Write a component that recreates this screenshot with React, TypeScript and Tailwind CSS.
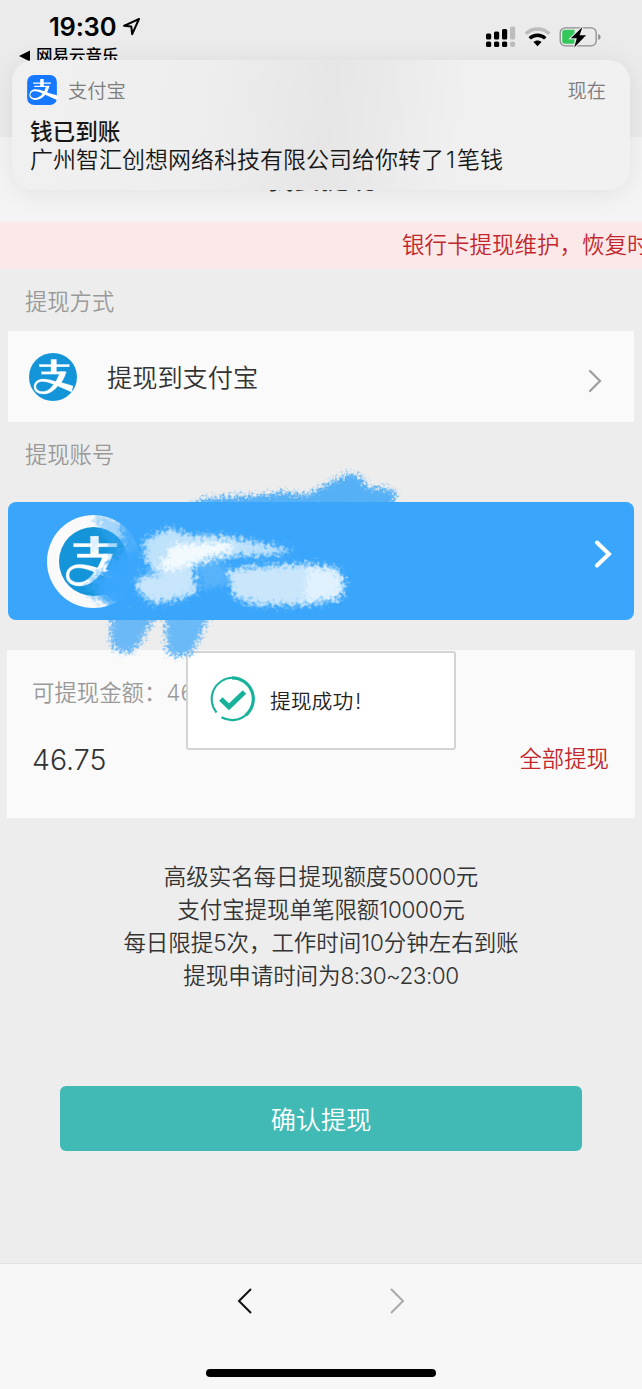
import React from "react";
import { SiAlipay } from "react-icons/si";

function AlipayGlyph({ className }: { className?: string }) {
  return (
    <svg viewBox="0 0 48 48" className={className} fill="none">
      <g fill="#fff" stroke="#fff" strokeWidth=".3">
        <rect x="10.300" y="11.500" width="30" height="2.300" />
        <rect x="22" y="6.400" width="5.400" height="14" />
        <rect x="12.700" y="18.800" width="23" height="2.300" />
        <path d="M30.800 18.800h6.500c-1.200 4-2.900 7.500-5 10.700l11.700 3.400-1.500 6L28.700 32.900c-3.600 4.600-8.200 8.100-14.500 8.100-5.600 0-9.200-2.900-9.200-7.200 0-4.900 4.300-7.700 9-7.700 4.300 0 8.400 1 12.700 2.500 1.600-2.700 3.200-5.700 4.100-9.800zM13.300 28.400c-3.700 0-6.300 2.100-6.300 5.100 0 3 2.700 5.100 6.900 5.100 4.200 0 8-2.900 10.700-7.300-4.100-1.700-7.800-2.900-11.300-2.900z" />
      </g>
    </svg>
  );
}

function StatusIcons() {
  return (
    <svg width="118" height="24" viewBox="0 0 118 24">
      <g fill="#000">
        <rect x="2" y="8.500" width="5.200" height="6" rx="1.500" />
        <rect x="10" y="6.500" width="5.200" height="8" rx="1.500" />
        <rect x="18" y="4" width="5.200" height="10.500" rx="1.500" />
        <rect x="2" y="16.500" width="5.200" height="5.500" rx="1.500" />
        <rect x="10" y="16.500" width="5.200" height="5.500" rx="1.500" />
        <rect x="18" y="16.500" width="5.200" height="5.500" rx="1.500" />
      </g>
      <g fill="#bdbdbd">
        <rect x="26" y="1.500" width="5.200" height="13" rx="1.500" />
        <rect x="26" y="16.500" width="5.200" height="5.500" rx="2" />
      </g>
      <g fill="none" strokeWidth="3.400">
        <path d="M41.800 8.700c6.500-6.300 17-6.300 23.500 0" stroke="#bdbdbd" />
        <path d="M45.700 13.400c4.300-4.300 11.300-4.300 15.600 0" stroke="#000" />
      </g>
      <path d="M49.500 17c2.200-2 5.800-2 8 0l-4 4.200z" fill="#000" />
      <rect x="76.200" y="2.800" width="36" height="18" rx="5" fill="none" stroke="#8e8e8e" strokeWidth="1.300" />
      <path d="M81 4.800h9.500v14H81a2.800 2.800 0 0 1-2.800-2.800V7.600A2.800 2.800 0 0 1 81 4.800z" fill="#34c759" />
      <path d="M114.200 9v6c1.900-.8 2.400-1.900 2.400-3s-.5-2.200-2.400-3z" fill="#8e8e8e" />
      <path d="M98.500 2 86.800 13.200h6l-2.600 9.300 11.900-12.300h-6.500z" fill="#000" stroke="#ededed" strokeWidth="2" paintOrder="stroke" />
    </svg>
  );
}

function BrushStrokes() {
  return (
    <svg className="absolute left-0 -top-[42px] w-[442px] h-[210px] pointer-events-none" viewBox="0 460 442 210">
      <defs>
        <filter id="rough" x="-20%" y="-30%" width="140%" height="160%" colorInterpolationFilters="sRGB">
          <feGaussianBlur stdDeviation="2.200" result="b" />
          <feTurbulence type="fractalNoise" baseFrequency="0.350" numOctaves="3" seed="4" result="n" />
          <feDisplacementMap in="b" in2="n" scale="15" xChannelSelector="R" yChannelSelector="G" />
          <feGaussianBlur stdDeviation="0.700" />
        </filter>
        <filter id="soft" x="-30%" y="-30%" width="160%" height="160%" colorInterpolationFilters="sRGB">
          <feGaussianBlur stdDeviation="2.600" result="b" />
          <feTurbulence type="fractalNoise" baseFrequency="0.250" numOctaves="3" seed="8" result="n" />
          <feDisplacementMap in="b" in2="n" scale="15" xChannelSelector="R" yChannelSelector="G" />
          <feGaussianBlur stdDeviation="0.600" />
        </filter>
      </defs>
      <g filter="url(#rough)">
        <path d="M188 508 196 501 212 498 235 496 262 495 282 492 307 495 325 485 350 473 361 477 367 487 385 488 397 492 392 508z" fill="#55b0f6" />
        <path d="M112 612 110 636 112 647 122 653 133 652 142 640 158 612z" fill="#6bb9f7" />
        <path d="M164 612 167 653 178 657 192 653 200 638 204 626 214 612z" fill="#6bbaf8" />
      </g>
      <path d="M175 502h245v20H175zM142 598h95v22h-95zM90 608h55v12H90z" fill="#3aa6fb" />
      <g filter="url(#soft)">
        <path d="M92 514C112 513 134 528 140 548L136 596 112 608 98 602 84 590 92 574 106 570 112 552 104 535z" fill="#3aa6fb" opacity=".45" />
        <path d="M122 518 144 530 146 600 116 608 100 598 94 580 110 568 122 552z" fill="#3aa6fb" opacity=".85" />
        <path d="M106 564 142 548 146 604 116 604 104 590z" fill="#3aa6fb" opacity=".85" />
        <path d="M92 536h5v14h-5z" fill="#3aa6fb" opacity=".3" />
        <path d="M144 540 170 528 188 535 224 536 250 541 292 550 278 555 235 556 208 562 178 572 150 570 145 556z" fill="#bfe2fb" />
        <path d="M172 545 225 542 236 549 202 559 176 570 154 570 166 557z" fill="#f3fafe" />
        <path d="M137 578 192 565 198 592 180 599 152 604 137 590z" fill="#c7e5fb" />
        <path d="M198 566 222 560 226 584 204 590z" fill="#6dbdfc" opacity=".6" />
        <path d="M226 570 262 566 310 564 338 568 345 582 342 598 310 605 255 605 234 597z" fill="#c9e6fb" />
        <path d="M308 567 334 571 342 584 336 596 304 602z" fill="#e1f2fe" />
      </g>
    </svg>
  );
}

function Notification() {
  return (
    <section className="absolute left-3 top-[60px] w-[618px] h-[130px] rounded-[22px] bg-[linear-gradient(97deg,#f0f0f0_0%,#eeeeee_30%,#e6e6e6_51%,#eaeaea_60%,#f0f0f0_72%,#f1f1f1_100%)] shadow-[0_3px_26px_rgba(0,0,0,0.08)] pt-[15px] pl-[15px] pr-[24px]">
      <div className="flex h-[30px] items-center">
        <span className="relative flex size-[30px] items-center justify-center overflow-hidden rounded-[7px] bg-white">
          <SiAlipay className="size-[30px] text-[#1677ff]" />
        </span>
        <span className="mt-px ml-[11px] text-[19.300px] leading-[30px] text-[#7d7d7d]">支付宝</span>
        <span className="mt-px ml-auto text-[19.300px] leading-[30px] text-[#7d7d7d]">现在</span>
      </div>
      <div className="mt-[12px] ml-[3px] text-[22.600px] leading-[29px] font-medium text-[#171717]">钱已到账</div>
      <div className="ml-[3px] text-[23px] leading-[29px] whitespace-nowrap text-[#171717]">广州智汇创想网络科技有限公司给你转了<span className="mx-[2px]">1</span>笔钱</div>
    </section>
  );
}

function Toast() {
  return (
    <div className="absolute left-[186px] top-[651px] flex h-[99px] w-[270px] items-center rounded-[3px] border-2 border-[#d4d4d4] bg-white pl-[20px]">
      <svg className="-mt-[4px]" width="48" height="48" viewBox="0 0 48 48" fill="none" stroke="#17b29a">
        <path d="M8.500 37.500A21.200 21.200 0 0 1 24.500 2.800" strokeWidth="2" />
        <path d="M24 2.800A21.200 21.200 0 0 1 38 40" strokeWidth="3.200" />
        <path d="M39 39A21.200 21.200 0 0 1 13.500 42.300" strokeWidth="2.200" />
        <path d="M12.800 24 21 31.800 36.500 17" strokeWidth="5" />
      </svg>
      <span className="mt-[3px] ml-[14px] text-[20.800px] leading-[30px] text-[#222]">提现成功<span className="ml-[2px]">!</span></span>
    </div>
  );
}

export default function App() {
  return (
    <main className="relative flex h-[1389px] w-[642px] flex-col overflow-hidden bg-[#ededed] font-['Inter','Noto_Sans_CJK_SC',sans-serif] font-[350]">
      <header className="h-[137px] shrink-0 bg-[#ebebeb]">
        <div className="flex h-[46px] items-start justify-between">
          <div className="flex pt-[11px] pl-[49px]">
            <span className="text-[25.500px] leading-[32px] font-semibold tracking-[-0.200px] text-black">19:30</span>
            <svg className="mt-[6px] ml-[6px]" width="19" height="19" viewBox="0 0 19 19" fill="none" stroke="#000" strokeWidth="2" strokeLinejoin="round">
              <path d="M17 2 2 8.800l7.300.8.900 7.600z" />
            </svg>
          </div>
          <div className="pt-[25px] pr-[40px]"><StatusIcons /></div>
        </div>
        <div className="flex h-[20px] items-center gap-[6px] pl-[19px] text-[16.500px] font-medium text-black">
          <svg width="11" height="12" viewBox="0 0 11 12"><path d="M0 6 11 .5v11z" /></svg>
          <span className="leading-5">网易云音乐</span>
        </div>
      </header>
      <div className="flex h-[85px] shrink-0 items-center justify-center bg-[#f4f4f4] pt-px text-[27px] font-medium text-[#333]">我要提现</div>
      <div className="h-[47px] shrink-0 overflow-hidden bg-[#fbe8e8] pl-[402px] text-[22.500px] leading-[45px] whitespace-nowrap text-[#c1272d]">银行卡提现维护，恢复时间另行通知</div>
      <div className="h-[62px] shrink-0 pl-[25px] text-[22.300px] leading-[65px] text-[#999]">提现方式</div>
      <div className="mx-2 flex h-[91px] shrink-0 items-center bg-[#fafafa] pr-[32px] pl-[21px]">
        <span className="size-12 shrink-0 rounded-full bg-[#1495da]"><AlipayGlyph className="size-12" /></span>
        <span className="mt-[4px] ml-[30px] text-[25.200px] text-[#333]">提现到支付宝</span>
        <svg className="mt-[8px] ml-auto" width="14" height="24" viewBox="0 0 14 24" fill="none" stroke="#a0a0a0" strokeWidth="2.300" strokeLinecap="round"><path d="m2 2 10 10L2 22" /></svg>
      </div>
      <div className="h-[80px] shrink-0 pl-[25px] text-[22.300px] leading-[66px] text-[#999]">提现账号</div>
      <div className="relative z-10 h-[118px] shrink-0">
        <div className="mx-2 flex h-[118px] items-center rounded-lg bg-[#3aa6fb] pr-[22px] pl-[39px]">
          <span className="flex size-[93px] items-center justify-center rounded-full bg-[#fafafa]">
            <span className="size-[69px] rounded-full bg-[#1495da]"><AlipayGlyph className="size-[69px]" /></span>
          </span>
          <svg className="-mt-[14px] ml-auto" width="18" height="28" viewBox="0 0 18 28" fill="none" stroke="#fff" strokeWidth="4" strokeLinecap="round"><path d="m3 2.500 12 11.500L3 25.500" /></svg>
        </div>
        <BrushStrokes />
      </div>
      <div className="mx-[7px] mt-[30px] h-[168px] shrink-0 bg-[#fafafa] px-[25px] pt-[26px]">
        <div className="text-[22.400px] leading-[34px] text-[#999]">可提现金额：46.75</div>
        <div className="mt-[31px] flex items-center justify-between">
          <span className="text-[28.500px] leading-[38px] text-[#333]">46.75</span>
          <span className="-mt-[3px] mr-px text-[22.400px] leading-[34px] text-[#c1272d]">全部提现</span>
        </div>
      </div>
      <div className="mt-[42px] text-center text-[22.500px] leading-[33px] tracking-[-0.050px] text-[#333]">
        <p>高级实名每日提现额度<span className="tracking-[-0.300px]">50000</span>元</p>
        <p>支付宝提现单笔限额<span className="tracking-[-0.300px]">10000</span>元</p>
        <p>每日限提5次，工作时间10分钟左右到账</p>
        <p>提现申请时间为<span className="tracking-[-0.500px]">8:30~23:00</span></p>
      </div>
      <button className="mx-[60px] mt-[94px] h-[65px] shrink-0 rounded-md bg-[#41bab6] pt-[4px] text-[25.200px] text-white">确认提现</button>
      <footer className="mt-auto flex h-[126px] shrink-0 flex-col items-center border-t border-[#e3e3e3] bg-[#f7f7f7]">
        <div className="mt-[24px] flex w-[168px] justify-between">
          <svg width="16" height="26" viewBox="0 0 16 26" fill="none" stroke="#111" strokeWidth="2"><path d="M14 1 2 13l12 12" /></svg>
          <svg width="16" height="26" viewBox="0 0 16 26" fill="none" stroke="#aaa" strokeWidth="2"><path d="m2 1 12 12L2 25" /></svg>
        </div>
        <div className="mt-auto mb-[12px] h-[8px] w-[230px] rounded-full bg-black" />
      </footer>
      <Notification />
      <Toast />
    </main>
  );
}
